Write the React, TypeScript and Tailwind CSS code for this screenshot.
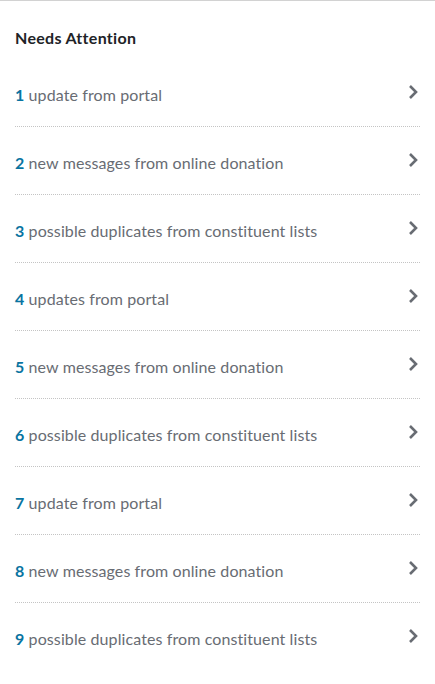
const items = [
  { count: 1, label: "update from portal" },
  { count: 2, label: "new messages from online donation" },
  { count: 3, label: "possible duplicates from constituent lists" },
  { count: 4, label: "updates from portal" },
  { count: 5, label: "new messages from online donation" },
  { count: 6, label: "possible duplicates from constituent lists" },
  { count: 7, label: "update from portal" },
  { count: 8, label: "new messages from online donation" },
  { count: 9, label: "possible duplicates from constituent lists" },
];

function Chevron() {
  return (
    <svg width="10" height="16" viewBox="0 0 10 16" className="shrink-0">
      <path d="M2 2 L8 8 L2 14" fill="none" stroke="#686c73" strokeWidth="2.6" />
    </svg>
  );
}

export default function App() {
  return (
    <div
      className="w-[435px] h-[684px] bg-white border-t border-[#d2d2d2] overflow-hidden"
      style={{ fontFamily: "Lato, 'Open Sans', sans-serif" }}
    >
      <div className="px-[15px]">
        <h2 className="pt-[27px] pb-[11px] text-[16px] leading-[20px] font-bold tracking-[0.3px] text-[#212327]">
          Needs Attention
        </h2>
        <ul>
          {items.map((item, i) => (
            <li
              key={i}
              className={`h-[68px] flex items-center justify-between pr-[2px] ${
                i < items.length - 1 ? "border-b border-dotted border-[#c4c4c4]" : ""
              }`}
            >
              <span className="text-[16px] leading-[20px] text-[#686c73] pt-[4px] tracking-[0.1px]">
                <span className="font-bold text-[#0974a1]">{item.count}</span>{" "}
                {item.label}
              </span>
              <span className="-mt-[2px]">
                <Chevron />
              </span>
            </li>
          ))}
        </ul>
      </div>
    </div>
  );
}
